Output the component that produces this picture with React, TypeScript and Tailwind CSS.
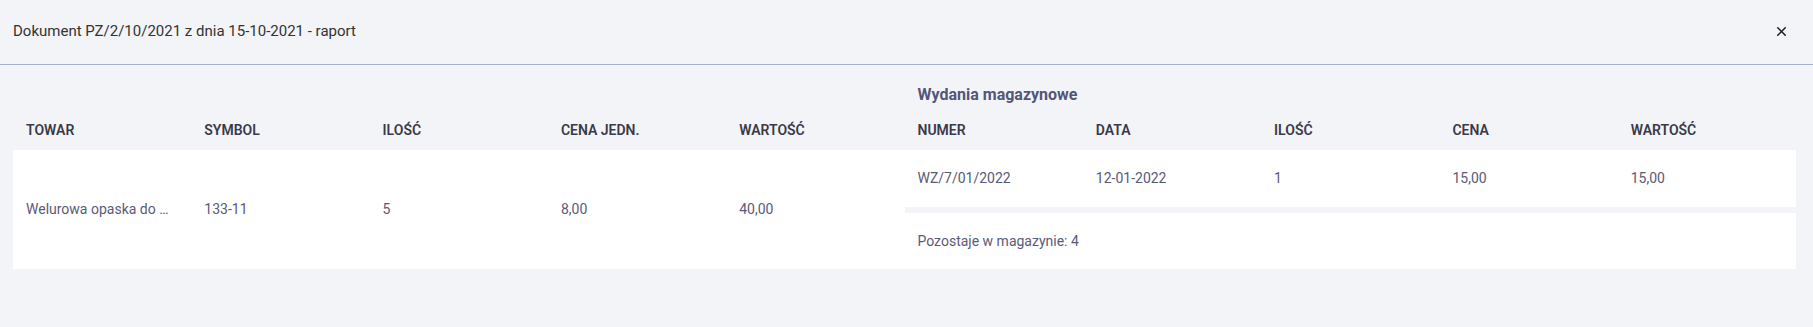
import { X } from "lucide-react";

const font = { fontFamily: "Roboto, 'Noto Sans', sans-serif" };

const leftHeaders = ["Towar", "Symbol", "Ilość", "Cena jedn.", "Wartość"];
const rightHeaders = ["Numer", "Data", "Ilość", "Cena", "Wartość"];

function HeaderRow({ labels }: { labels: string[] }) {
  return (
    <div className="grid grid-cols-5 h-10 items-center">
      {labels.map((l) => (
        <div key={l} className="px-[13px] text-[14px] font-semibold uppercase text-[#3a3a48]">
          {l}
        </div>
      ))}
    </div>
  );
}

export default function App() {
  return (
    <div className="w-[1813px] h-[327px] bg-[#f2f4f8] text-[14px]" style={font}>
      {/* Header */}
      <div className="h-[65px] border-b border-[#a3b1c9] pl-[13px] pr-[24px] flex items-center justify-between">
        <span className="text-[15px] text-[#333333] pb-[1px]">Dokument PZ/2/10/2021 z dnia 15-10-2021 - raport</span>
        <X className="w-[15px] h-[15px] text-[#1f2430] mb-[2px]" strokeWidth={2.5} />
      </div>

      {/* Content */}
      <div className="pl-[13px] pr-[17px] pt-[15px] flex items-end">
        {/* Pozycje dokumentu */}
        <div className="flex-1">
          <HeaderRow labels={leftHeaders} />
          <div className="grid grid-cols-5 h-[119px] items-center bg-white text-[#5a5a78]">
            <div className="px-[13px] truncate">Welurowa opaska do włosów</div>
            <div className="px-[13px]">133-11</div>
            <div className="px-[13px]">5</div>
            <div className="px-[13px]">8,00</div>
            <div className="px-[13px]">40,00</div>
          </div>
        </div>

        {/* Wydania magazynowe */}
        <div className="flex-1">
          <div className="h-[30px] flex items-center px-[13px] text-[16px] font-bold text-[#555577]">
            Wydania magazynowe
          </div>
          <HeaderRow labels={rightHeaders} />
          <div className="flex flex-col gap-[6px] text-[#5a5a78]">
            <div className="grid grid-cols-5 h-[57px] items-center bg-white">
              <div className="px-[13px]">WZ/7/01/2022</div>
              <div className="px-[13px]">12-01-2022</div>
              <div className="px-[13px]">1</div>
              <div className="px-[13px]">15,00</div>
              <div className="px-[13px]">15,00</div>
            </div>
            <div className="h-[56px] flex items-center bg-white px-[13px]">Pozostaje w magazynie: 4</div>
          </div>
        </div>
      </div>
    </div>
  );
}
